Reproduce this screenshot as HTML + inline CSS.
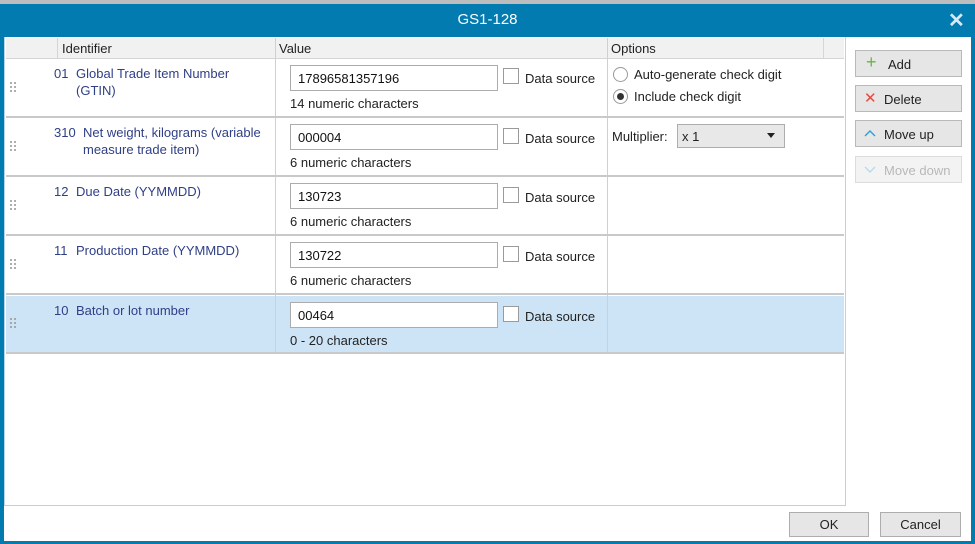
<!DOCTYPE html>
<html><head><style>
*{box-sizing:border-box;margin:0;padding:0}
body{width:975px;height:544px;position:relative;overflow:hidden;background:#fff;font-family:"Liberation Sans",sans-serif;font-size:13px;color:#222}
.a{position:absolute}
.tb{position:absolute;background:#fff;border:1px solid #acacac;height:26px;width:208px;padding:5px 7px;font-size:13px;color:#111}
.cb{position:absolute;width:16px;height:16px;border:1px solid #9a9a9a;background:#fff}
.id{position:absolute;color:#2f3f86;font-size:13px;line-height:17px}
.hint{position:absolute;font-size:13px;color:#222}
.sep{position:absolute;left:6px;width:838px;height:2px;background:#c9c9c9}
.btn{position:absolute;left:855px;width:107px;height:27px;background:#e6e6e6;border:1px solid #b9b9b9;font-size:13px;line-height:25px}
.dots{position:absolute;width:8px;height:12px;background-image:radial-gradient(circle,#999 0.9px,transparent 1.1px);background-size:4px 4px}
</style></head><body>
<div class="a" style="left:0;top:0;width:975px;height:4px;background:#bdbdbd"></div>
<div class="a" style="left:0;top:4px;width:975px;height:33px;background:#027bb0"></div>
<div class="a" style="left:0;top:11px;width:975px;text-align:center;color:#fff;font-size:15px">GS1-128</div>
<div class="a" style="left:948px;top:8px;color:#d6eaf5;font-size:20px;font-weight:bold">✕</div>
<div class="a" style="left:0;top:37px;width:4px;height:507px;background:#027bb0"></div>
<div class="a" style="left:971px;top:37px;width:4px;height:507px;background:#027bb0"></div>
<div class="a" style="left:0;top:541px;width:975px;height:3px;background:#027bb0"></div>

<!-- grid -->
<div class="a" style="left:4px;top:37px;width:842px;height:469px;border:1px solid #b8d3e8;border-top:none"></div>
<div class="a" style="left:6px;top:38px;width:838px;height:21px;background:#f1f1f1;border-bottom:1px solid #d5d5d5"></div>
<div class="a" style="left:57px;top:38px;width:1px;height:21px;background:#d5d5d5"></div>
<div class="a" style="left:823px;top:38px;width:1px;height:21px;background:#d5d5d5"></div>
<div class="a" style="left:62px;top:41px">Identifier</div>
<div class="a" style="left:279px;top:41px">Value</div>
<div class="a" style="left:611px;top:41px">Options</div>

<div class="a" style="left:6px;top:296px;width:838px;height:57px;background:#cde4f6"></div>
<div class="a" style="left:275px;top:38px;width:1px;height:315px;background:#d0d0d0"></div>
<div class="a" style="left:607px;top:38px;width:1px;height:315px;background:#d0d0d0"></div>

<div class="sep" style="top:116px"></div>
<div class="sep" style="top:175px"></div>
<div class="sep" style="top:234px"></div>
<div class="sep" style="top:293px"></div>
<div class="sep" style="top:352px"></div>

<!-- row1 -->
<div class="dots" style="left:9px;top:81px"></div>
<div class="id" style="left:54px;top:65px">01</div>
<div class="id" style="left:76px;top:65px">Global Trade Item Number<br>(GTIN)</div>
<div class="tb" style="left:290px;top:65px">17896581357196</div>
<div class="cb" style="left:503px;top:68px"></div>
<div class="a" style="left:525px;top:71px">Data source</div>
<div class="hint" style="left:290px;top:96px">14 numeric characters</div>
<div class="a" style="left:613px;top:67px;width:15px;height:15px;border:1px solid #999;border-radius:50%;background:#fff"></div>
<div class="a" style="left:634px;top:67px">Auto-generate check digit</div>
<div class="a" style="left:613px;top:89px;width:15px;height:15px;border:1px solid #999;border-radius:50%;background:#fff"><div class="a" style="left:3px;top:3px;width:7px;height:7px;border-radius:50%;background:#333"></div></div>
<div class="a" style="left:634px;top:89px">Include check digit</div>

<!-- row2 -->
<div class="dots" style="left:9px;top:140px"></div>
<div class="id" style="left:54px;top:124px">310</div>
<div class="id" style="left:83px;top:124px">Net weight, kilograms (variable<br>measure trade item)</div>
<div class="tb" style="left:290px;top:124px">000004</div>
<div class="cb" style="left:503px;top:128px"></div>
<div class="a" style="left:525px;top:131px">Data source</div>
<div class="hint" style="left:290px;top:155px">6 numeric characters</div>
<div class="a" style="left:612px;top:129px">Multiplier:</div>
<div class="a" style="left:677px;top:124px;width:108px;height:24px;background:#e8e8e8;border:1px solid #adadad;padding:4px 4px">x 1</div>
<div class="a" style="left:767px;top:133px;width:0;height:0;border-left:4px solid transparent;border-right:4px solid transparent;border-top:5px solid #222"></div>

<!-- row3 -->
<div class="dots" style="left:9px;top:199px"></div>
<div class="id" style="left:54px;top:183px">12</div>
<div class="id" style="left:76px;top:183px">Due Date (YYMMDD)</div>
<div class="tb" style="left:290px;top:183px">130723</div>
<div class="cb" style="left:503px;top:187px"></div>
<div class="a" style="left:525px;top:190px">Data source</div>
<div class="hint" style="left:290px;top:214px">6 numeric characters</div>

<!-- row4 -->
<div class="dots" style="left:9px;top:258px"></div>
<div class="id" style="left:54px;top:242px">11</div>
<div class="id" style="left:76px;top:242px">Production Date (YYMMDD)</div>
<div class="tb" style="left:290px;top:242px">130722</div>
<div class="cb" style="left:503px;top:246px"></div>
<div class="a" style="left:525px;top:249px">Data source</div>
<div class="hint" style="left:290px;top:273px">6 numeric characters</div>

<!-- row5 -->
<div class="dots" style="left:9px;top:317px"></div>
<div class="id" style="left:54px;top:302px">10</div>
<div class="id" style="left:76px;top:302px">Batch or lot number</div>
<div class="tb" style="left:290px;top:302px">00464</div>
<div class="cb" style="left:503px;top:306px"></div>
<div class="a" style="left:525px;top:309px">Data source</div>
<div class="hint" style="left:290px;top:333px">0 - 20 characters</div>

<!-- side buttons -->
<div class="btn" style="top:50px"><span class="a" style="left:10px;top:-1px;color:#6cb33f;font-size:18px">+</span><span class="a" style="left:32px;top:1px">Add</span></div>
<div class="btn" style="top:85px"><span class="a" style="left:8px;top:0;color:#e84a3c;font-size:15px">✕</span><span class="a" style="left:28px;top:1px">Delete</span></div>
<div class="btn" style="top:120px"><svg class="a" style="left:8px;top:8px" width="12" height="8"><path d="M1 7 L6 2 L11 7" stroke="#2a9fd8" stroke-width="1.4" fill="none"/></svg><span class="a" style="left:28px;top:1px">Move up</span></div>
<div class="btn" style="top:156px;background:#f3f3f3;border-color:#dcdcdc;color:#b8b8b8"><svg class="a" style="left:8px;top:9px" width="12" height="8"><path d="M1 1 L6 6 L11 1" stroke="#b6dbef" stroke-width="1.4" fill="none"/></svg><span class="a" style="left:28px;top:1px">Move down</span></div>

<!-- bottom buttons -->
<div class="a" style="left:789px;top:512px;width:80px;height:25px;background:#e6e6e6;border:1px solid #adadad;text-align:center;line-height:23px">OK</div>
<div class="a" style="left:880px;top:512px;width:81px;height:25px;background:#e6e6e6;border:1px solid #adadad;text-align:center;line-height:23px">Cancel</div>
</body></html>
